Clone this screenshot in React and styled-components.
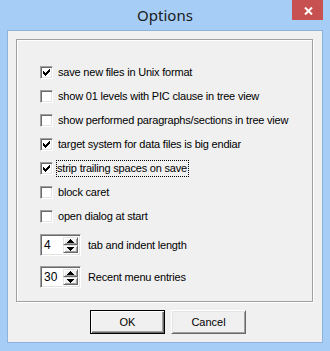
import React from "react";
import styled, { createGlobalStyle } from "styled-components";

const Global = createGlobalStyle`
  html, body { margin: 0; padding: 0; width: 330px; height: 351px; overflow: hidden; background: #a6cdf5; }
  * { box-sizing: border-box; }
`;

const Window = styled.div`
  width: 330px;
  height: 351px;
  background: #a6cdf5;
  display: flex;
  flex-direction: column;
`;

const TitleBar = styled.div`
  height: 30px;
  display: grid;
  grid-template-columns: 1fr auto 1fr;
`;

const Title = styled.div`
  grid-column: 2;
  align-self: center;
  font-family: "Noto Sans", "Open Sans", sans-serif;
  font-size: 15px;
  line-height: 30px;
  color: #1a1a1a;
  padding-bottom: 1px;
`;

const CloseButton = styled.div`
  grid-column: 3;
  justify-self: end;
  align-self: start;
  width: 31px;
  height: 20px;
  margin-right: 7px;
  background: #c75050;
  display: flex;
  align-items: center;
  justify-content: center;
  padding-top: 1px;
  padding-left: 2px;
`;

const Client = styled.div`
  flex: 1;
  margin: 0 7px 8px 7px;
  border: 1px solid #8db3dc;
  background: #f0f0f0;
  padding: 8px 9px 0 8px;
  display: flex;
  flex-direction: column;
  font-family: "Liberation Sans", Arial, sans-serif;
  font-size: 11px;
  letter-spacing: -0.2px;
  color: #000;
`;

const GroupBox = styled.div`
  width: 297px;
  height: 263px;
  border: 1px solid #a0a0a0;
  box-shadow: inset 1px 1px 0 #fff, 1px 1px 0 #fff;
  padding: 26px 0 0 23px;
  display: flex;
  flex-direction: column;
  gap: 11px;
`;

const CheckRow = styled.div`
  height: 13px;
  display: flex;
  align-items: center;
  gap: ${(p) => (p.$focused ? 4 : 5)}px;
  white-space: nowrap;
`;

const Box = styled.span`
  width: 13px;
  height: 13px;
  flex: none;
  border: 1px solid;
  border-color: #a0a0a0 #fff #fff #a0a0a0;
  box-shadow: inset 1px 1px 0 #696969, inset -1px -1px 0 #e3e3e3;
  background: #fff;
  padding: 2px;
  display: flex;
`;

const Label = styled.span`
  line-height: 13px;
  padding: 1px 1px 1px 0;
  border: 1px dotted ${(p) => (p.$focused ? "#000" : "transparent")};
  margin-left: -1px;
`;

const SpinRow = styled.div`
  height: 22px;
  display: flex;
  align-items: center;
  gap: 7px;
  margin-top: ${(p) => p.$mt}px;
  white-space: nowrap;
`;

const Edit = styled.div`
  width: 41px;
  height: 22px;
  flex: none;
  border: 1px solid;
  border-color: #a0a0a0 #fff #fff #a0a0a0;
  box-shadow: inset 1px 1px 0 #696969, inset -1px -1px 0 #e3e3e3;
  background: #fff;
  padding: 2px 2px 2px 3px;
  display: flex;
  align-items: center;
`;

const EditText = styled.span`
  flex: 1;
  font-size: 12px;
  letter-spacing: 0;
`;

const UpDown = styled.div`
  width: 15px;
  align-self: stretch;
  display: flex;
  flex-direction: column;
`;

const Arrow = styled.div`
  flex: 1;
  background: #f0f0f0;
  border: 1px solid;
  border-color: #e3e3e3 #696969 #696969 #e3e3e3;
  box-shadow: inset 1px 1px 0 #fff, inset -1px -1px 0 #a0a0a0;
  display: flex;
  align-items: center;
  justify-content: center;
`;

const ButtonRow = styled.div`
  display: flex;
  gap: 6px;
  margin-top: 8px;
  padding-left: 74px;
`;

const Button = styled.div`
  width: 75px;
  height: 24px;
  background: #f0f0f0;
  display: flex;
  align-items: center;
  justify-content: center;
  font-size: 11px;
  letter-spacing: 0;
  border: 1px solid ${(p) => (p.$default ? "#000" : "#fff")};
  ${(p) =>
    p.$default
      ? `box-shadow: inset 1px 1px 0 #fff, inset -1px -1px 0 #696969, inset -2px -2px 0 #a0a0a0;`
      : `border-color: #fff #696969 #696969 #fff; box-shadow: inset 1px 1px 0 #e3e3e3, inset -1px -1px 0 #a0a0a0;`}
`;

const checkPixels = [
  "......#",
  ".....##",
  "#...###",
  "##.###.",
  "#####..",
  ".###...",
  "..#....",
];

const CheckMark = () => (
  <svg width="7" height="7" viewBox="0 0 7 7" shapeRendering="crispEdges">
    {checkPixels.flatMap((row, y) =>
      row.split("").map((c, x) =>
        c === "#" ? <rect key={`${x}-${y}`} x={x} y={y} width="1" height="1" fill="#000" /> : null
      )
    )}
  </svg>
);

const Check = ({ checked, focused, children }) => (
  <CheckRow $focused={focused}>
    <Box>{checked && <CheckMark />}</Box>
    <Label $focused={focused}>{children}</Label>
  </CheckRow>
);

const Spinner = ({ value, label, mt }) => (
  <SpinRow $mt={mt}>
    <Edit>
      <EditText>{value}</EditText>
      <UpDown>
        <Arrow>
          <svg width="7" height="4" viewBox="0 0 7 4" shapeRendering="crispEdges">
            <path d="M3 0h1v1h1v1h1v1h1v1H0V3h1V2h1V1h1z" fill="#000" />
          </svg>
        </Arrow>
        <Arrow>
          <svg width="7" height="4" viewBox="0 0 7 4" shapeRendering="crispEdges">
            <path d="M0 0h7v1H6v1H5v1H4v1H3V3H2V2H1V1H0z" fill="#000" />
          </svg>
        </Arrow>
      </UpDown>
    </Edit>
    <span>{label}</span>
  </SpinRow>
);

export default function App() {
  return (
    <>
      <Global />
      <Window>
        <TitleBar>
          <Title>Options</Title>
          <CloseButton>
            <svg width="9" height="8" viewBox="0 0 9 8">
              <path d="M1 0.5 L8 7.5 M8 0.5 L1 7.5" stroke="#fff" strokeWidth="2" />
            </svg>
          </CloseButton>
        </TitleBar>
        <Client>
          <GroupBox>
            <Check checked>save new files in Unix format</Check>
            <Check>show 01 levels with PIC clause in tree view</Check>
            <Check>show performed paragraphs/sections in tree view</Check>
            <Check checked>target system for data files is big endiar</Check>
            <Check checked focused>strip trailing spaces on save</Check>
            <Check>block caret</Check>
            <Check>open dialog at start</Check>
            <Spinner value="4" label="tab and indent length" mt={0} />
            <Spinner value="30" label="Recent menu entries" mt={-1} />
          </GroupBox>
          <ButtonRow>
            <Button $default>OK</Button>
            <Button>Cancel</Button>
          </ButtonRow>
        </Client>
      </Window>
    </>
  );
}
